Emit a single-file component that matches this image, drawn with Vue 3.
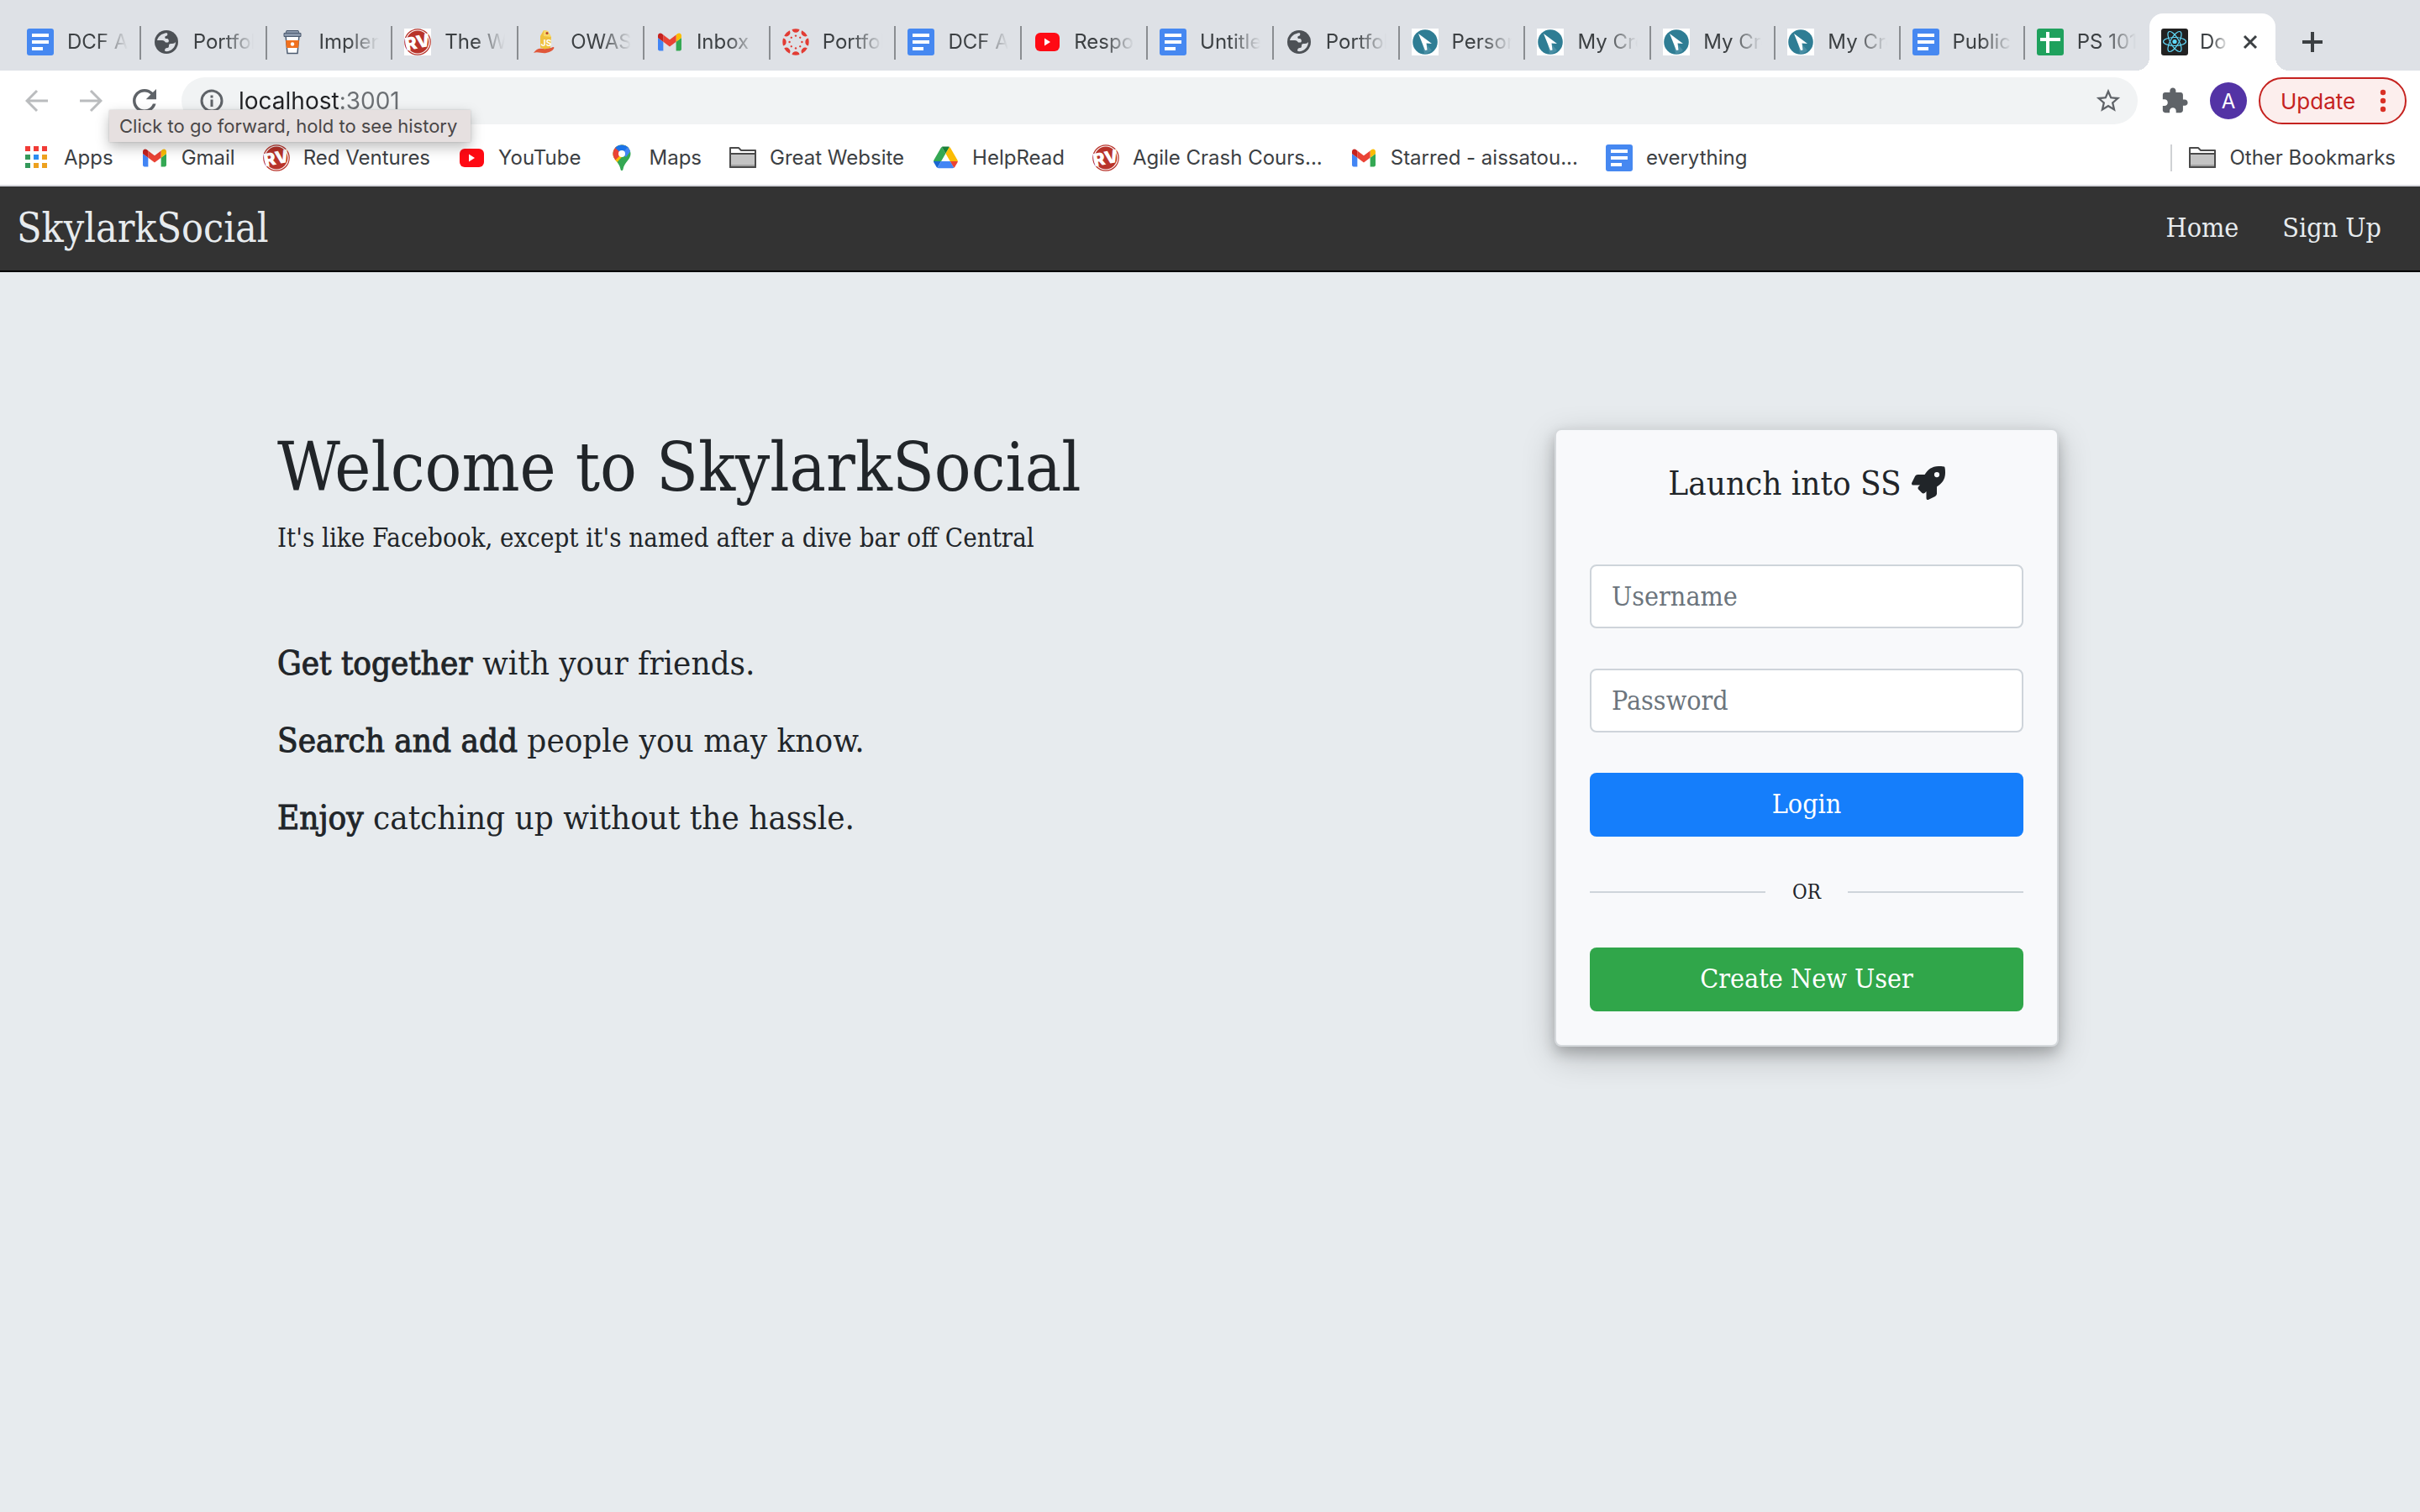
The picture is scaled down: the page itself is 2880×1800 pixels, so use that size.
<script setup>
import { ref } from 'vue'

const tabs = [
  { icon: 'docs', title: 'DCF A' },
  { icon: 'globe', title: 'Portfol' },
  { icon: 'coffee', title: 'Implen' },
  { icon: 'rv', title: 'The W', tile: true },
  { icon: 'juice', title: 'OWAS' },
  { icon: 'gmail', title: 'Inbox' },
  { icon: 'canvas', title: 'Portfol' },
  { icon: 'docs', title: 'DCF A' },
  { icon: 'youtube', title: 'Respo' },
  { icon: 'docs', title: 'Untitle' },
  { icon: 'globe', title: 'Portfol' },
  { icon: 'pointer', title: 'Person', tile: true },
  { icon: 'pointer', title: 'My Cre', tile: true },
  { icon: 'pointer', title: 'My Cre', tile: true },
  { icon: 'pointer', title: 'My Cre', tile: true },
  { icon: 'docs', title: 'Public' },
  { icon: 'sheets', title: 'PS 101' },
  { icon: 'react', title: 'Do', active: true },
]

const bookmarks = [
  { icon: 'apps', title: 'Apps' },
  { icon: 'gmail', title: 'Gmail' },
  { icon: 'rv', title: 'Red Ventures' },
  { icon: 'youtube', title: 'YouTube' },
  { icon: 'maps', title: 'Maps' },
  { icon: 'folder', title: 'Great Website' },
  { icon: 'drive', title: 'HelpRead' },
  { icon: 'rv', title: 'Agile Crash Cours...' },
  { icon: 'gmail', title: 'Starred - aissatou...' },
  { icon: 'docs', title: 'everything' },
]

const petals = [...Array(8)].map((_, i) => i * 45)
const orbits = [0, 60, 120]

const features = [
  { lead: 'Get together', rest: 'with your friends.' },
  { lead: 'Search and add', rest: 'people you may know.' },
  { lead: 'Enjoy', rest: 'catching up without the hassle.' },
]

const address = ref('localhost:3001')
const username = ref('')
const password = ref('')
</script>

<template>
  <div class="window">
    <svg class="sprite" aria-hidden="true">
      <symbol id="docs" viewBox="0 0 32 32">
        <rect width="32" height="32" rx="3" fill="#4688f1" />
        <path d="M6 6h20v4H6zM6 14h20v4H6zM6 22h13v4H6z" fill="#fff" />
      </symbol>
      <symbol id="sheets" viewBox="0 0 32 32">
        <rect width="32" height="32" rx="3" fill="#1fa15d" />
        <path d="M11 4h4v7h13v4H15v14h-4V15H4v-4h7z" fill="#fff" />
      </symbol>
      <symbol id="globe" viewBox="0 0 32 32">
        <circle cx="16" cy="16" r="14" fill="#4d5156" />
        <g transform="translate(2 2)" fill="#dee1e6">
          <path d="M11 4C7 5 4 8 3 12h6c2 0 3 1 4 2.500h3c1.500-1 1-4-1-4.500h-2c-1-1-1-2 0-3 2 0 3-2 2-3.500-1-.5-3 0-4 .5z" />
          <path d="M25 14c0 6-5 11-11 11.200l-2-.7c0-2 1-3.500 3-3.500s2-2 2-3c0-2 2-2 4-2s3-1 4-2z" />
        </g>
      </symbol>
      <symbol id="coffee" viewBox="0 0 32 32">
        <path d="M8 8h16l-2 21.500H10z" fill="#fff" stroke="#4c5b70" stroke-width="1.500" />
        <path d="M8 14h16l-1 9H9z" fill="#f0701d" />
        <circle cx="16" cy="18.500" r="2.200" fill="#fff" />
        <path d="M9 2.500h14l1 3H8z" fill="#8a97aa" stroke="#4c5b70" />
        <path d="M6 5.500h20v4H6z" fill="#8a97aa" stroke="#4c5b70" />
      </symbol>
      <symbol id="rv" viewBox="0 0 32 32">
        <circle cx="16" cy="16" r="15.200" fill="#fff" stroke="#b8332a" stroke-width="1.200" />
        <circle cx="16" cy="16" r="13.400" fill="#b8332a" />
        <text x="16" y="23.500" text-anchor="middle" font-family="Inter, sans-serif" font-size="21" font-weight="900" fill="#fff" transform="rotate(-12 16 16)">RV</text>
      </symbol>
      <symbol id="juice" viewBox="0 0 32 32">
        <path d="M4 29c3-5 7-6 11-5l10-1c3-2 4-1 3 1-2 3-5 4-9 5-5 1-10-2-15 0z" fill="#e0573a" />
        <path d="M12 9l4-7 5 1 4 7-1 13-7 1.500-5-2z" fill="#f0c13d" />
        <path d="M16 2l5 1 4 7-9-1z" fill="#f8d968" />
        <circle cx="20" cy="5.500" r="1.500" fill="#b5402f" />
        <text x="19" y="21" text-anchor="middle" font-family="Inter, sans-serif" font-size="10" font-weight="700" fill="#fff">JS</text>
      </symbol>
      <symbol id="gmail" viewBox="0 0 32 32">
        <g transform="translate(2 5.500) scale(.318) translate(-52 -42)">
          <path fill="#4285f4" d="M58 108h14V74L52 59v43c0 3.320 2.690 6 6 6" />
          <path fill="#34a853" d="M120 108h14c3.320 0 6-2.690 6-6V59l-20 15" />
          <path fill="#fbbc04" d="M120 48v26l20-15v-8c0-7.420-8.470-11.650-14.400-7.200" />
          <path fill="#ea4335" d="M72 74V48l24 18 24-18v26L96 92" />
          <path fill="#c5221f" d="M52 51v8l20 15V48l-5.600-4.200c-5.940-4.450-14.400-.22-14.400 7.200" />
        </g>
      </symbol>
      <symbol id="canvas" viewBox="0 0 32 32">
        <g v-for="a in petals" :key="a" :transform="`rotate(${a} 16 16)`" fill="#e23c34">
          <path d="M11.500 1a16 16 0 0 1 9 0 4.600 4.600 0 0 1-9 0z" />
          <circle cx="16" cy="8.600" r="1.200" />
        </g>
      </symbol>
      <symbol id="youtube" viewBox="0 0 32 32">
        <rect x="2" y="5" width="29" height="22" rx="6" fill="#ff0a14" />
        <path d="M13 11.500l7 4.500-7 4.500z" fill="#fff" />
      </symbol>
      <symbol id="pointer" viewBox="0 0 32 32">
        <circle cx="16" cy="16" r="14.800" fill="#2f7d94" />
        <path d="M12 12l12 14a14 14 0 0 1-9 4z" fill="#4a8fa5" />
        <path d="M8 6l16 12-6.500-.5 1 8-2.500.5z" fill="#fff" />
      </symbol>
      <symbol id="react" viewBox="0 0 32 32">
        <rect width="32" height="32" rx="3" fill="#222" />
        <circle cx="16" cy="15.500" r="2.600" fill="#61dafb" />
        <ellipse v-for="a in orbits" :key="a" cx="16" cy="15.500" rx="13.500" ry="5" fill="none" stroke="#61dafb" stroke-width="1.200" :transform="`rotate(${a} 16 15.500)`" />
      </symbol>
      <symbol id="apps" viewBox="0 0 32 32">
        <path d="M2 2h6v6H2zM12 2h6v6h-6zM22 2h6v6h-6z" fill="#f13b36" />
        <path d="M2 12h6v6H2zM2 22h6v6H2z" fill="#34995a" />
        <path d="M12 12h6v6h-6z" fill="#2d8cf0" />
        <path d="M22 12h6v6h-6zM12 22h6v6h-6zM22 22h6v6h-6z" fill="#eda11f" />
      </symbol>
      <symbol id="maps" viewBox="0 0 32 32">
        <clipPath id="pin"><path d="M16 .5c6 0 10.500 4.700 10.500 10.500C26.500 18 19 21 17.500 29.500c-.3 2-2.700 2-3 0C13 21 5.500 18 5.500 11 5.500 5.200 10 .5 16 .5z" /></clipPath>
        <g clip-path="url(#pin)">
          <rect width="32" height="32" fill="#34a853" />
          <path d="M26 4L4 28V12L18 -2z" fill="#fbbc04" />
          <path d="M16 11L8 19l-6-2V2h8z" fill="#ea4335" />
          <path d="M8 4l8 7 10-8L16 -3z" fill="#1a73e8" />
          <path d="M16 11l8-9 4 4-7 9z" fill="#4285f4" />
        </g>
        <circle cx="16" cy="11" r="4" fill="#fff" />
      </symbol>
      <symbol id="folder" viewBox="0 0 32 32">
        <path d="M1 27V4h10l3 3h17v20z" fill="#fff" stroke="#4a4a4a" stroke-width="2" stroke-linejoin="round" />
        <path d="M1 11h30v16H1z" fill="#c4c4c4" stroke="#4a4a4a" stroke-width="2" stroke-linejoin="round" />
        <path d="M2 24h28v2H2z" fill="#a2a2a2" />
      </symbol>
      <symbol id="drive" viewBox="0 0 32 32">
        <g transform="translate(2 2.500) scale(.33)">
          <path fill="#1967d2" d="m6.600 66.850 3.850 6.650c.8 1.400 1.950 2.500 3.300 3.300l13.750-23.800h-27.500c0 1.550.4 3.100 1.200 4.500z" />
          <path fill="#34a853" d="m43.650 25-13.750-23.800c-1.350.8-2.500 1.900-3.300 3.300l-25.400 44a9.060 9.060 0 0 0 -1.200 4.500h27.500z" />
          <path fill="#ea4335" d="m73.550 76.800c1.350-.8 2.500-1.900 3.300-3.300l1.600-2.750 7.650-13.250c.8-1.400 1.200-2.950 1.200-4.500h-27.500l5.850 11.500z" />
          <path fill="#188038" d="m43.650 25 13.750-23.800c-1.350-.8-2.900-1.200-4.500-1.200h-18.500c-1.600 0-3.150.45-4.500 1.200z" />
          <path fill="#4285f4" d="m59.800 53h-32.300l-13.750 23.800c1.350.8 2.900 1.200 4.500 1.200h50.800c1.600 0 3.150-.45 4.500-1.200z" />
          <path fill="#fbbc04" d="m73.400 26.500-12.700-22c-.8-1.400-1.950-2.500-3.300-3.300l-13.750 23.800 16.150 28h27.450c0-1.550-.4-3.100-1.200-4.500z" />
        </g>
      </symbol>
    </svg>

    <header class="chrome">
      <div class="tabstrip">
        <div v-for="(tab, i) in tabs" :key="i" class="tab" :class="{ active: tab.active }">
          <svg class="icon" :class="{ tile: tab.tile }"><use :href="'#' + tab.icon" /></svg>
          <span class="tab-title">{{ tab.title }}</span>
          <button v-if="tab.active" class="plain close" aria-label="Close tab">
            <svg viewBox="0 0 18 18"><path d="M2 2l14 14M16 2L2 16" stroke="#3c4043" stroke-width="3" /></svg>
          </button>
        </div>
        <button class="plain new-tab" aria-label="New tab">
          <svg viewBox="0 0 24 24"><path d="M12 0v24M0 12h24" stroke="#3c4043" stroke-width="4" /></svg>
        </button>
      </div>

      <div class="toolbar">
        <button class="plain nav-button" aria-label="Back">
          <svg viewBox="0 0 28 28"><path d="M27 14H3M14 2L2 14l12 12" fill="none" stroke="#babcbe" stroke-width="3" /></svg>
        </button>
        <div class="forward">
          <button class="plain nav-button" aria-label="Forward" aria-describedby="forward-tip">
            <svg viewBox="0 0 28 28"><path d="M1 14h24M14 2l12 12-12 12" fill="none" stroke="#babcbe" stroke-width="3" /></svg>
          </button>
          <span id="forward-tip" class="tooltip" role="tooltip">Click to go forward, hold to see history</span>
        </div>
        <button class="plain nav-button" aria-label="Reload">
          <svg viewBox="4 4 16 16"><path fill="#5f6368" d="M17.650 6.350C16.200 4.900 14.210 4 12 4c-4.420 0-7.990 3.580-7.990 8s3.570 8 7.990 8c3.730 0 6.840-2.550 7.730-6h-2.080c-.82 2.330-3.040 4-5.650 4-3.310 0-6-2.690-6-6s2.690-6 6-6c1.660 0 3.140.69 4.220 1.780L13 11h7V4l-2.350 2.350z" /></svg>
        </button>
        <div class="omnibox">
          <svg class="info" viewBox="0 0 28 28"><circle cx="14" cy="14" r="12" fill="none" stroke="#5f6368" stroke-width="3" /><path d="M12.500 12.500h3V21h-3zM12.500 7.500h3v3h-3z" fill="#5f6368" /></svg>
          <input v-model="address" class="address" type="text" aria-label="Address" />
          <button class="plain star" aria-label="Bookmark this page">
            <svg viewBox="0 0 24 24"><path fill="#5f6368" d="M22 9.240l-7.190-.62L12 2 9.190 8.630 2 9.240l5.460 4.730L5.820 21 12 17.270 18.180 21l-1.630-7.030L22 9.240zM12 15.400l-3.760 2.270 1-4.280-3.320-2.880 4.380-.38L12 6.100l1.710 4.040 4.380.38-3.320 2.880 1 4.280L12 15.400z" /></svg>
          </button>
        </div>
        <button class="plain extensions" aria-label="Extensions">
          <svg viewBox="0 0 24 24"><path fill="#5f6368" d="M20.500 11H19V7c0-1.100-.9-2-2-2h-4V3.500C13 2.120 11.880 1 10.500 1S8 2.120 8 3.500V5H4c-1.100 0-1.990.9-1.990 2v3.800H3.500c1.490 0 2.700 1.210 2.700 2.700s-1.210 2.700-2.700 2.700H2V20c0 1.100.9 2 2 2h3.800v-1.500c0-1.490 1.210-2.700 2.700-2.700 1.490 0 2.700 1.210 2.700 2.700V22H17c1.100 0 2-.9 2-2v-4h1.500c1.380 0 2.500-1.120 2.500-2.500S21.880 11 20.500 11z" /></svg>
        </button>
        <button class="plain avatar">A</button>
        <button class="plain update">
          Update
          <svg viewBox="0 0 8 28"><circle cx="4" cy="4" r="3.200" /><circle cx="4" cy="14" r="3.200" /><circle cx="4" cy="24" r="3.200" /></svg>
        </button>
      </div>

      <nav class="bookmarks" aria-label="Bookmarks">
        <a v-for="mark in bookmarks" :key="mark.title" class="bookmark" href="#">
          <svg class="icon"><use :href="'#' + mark.icon" /></svg>{{ mark.title }}
        </a>
        <a class="bookmark other" href="#">
          <svg class="icon"><use href="#folder" /></svg>Other Bookmarks
        </a>
      </nav>
    </header>

    <nav class="site-nav" aria-label="Main">
      <a class="brand" href="#">SkylarkSocial</a>
      <a href="#">Home</a>
      <a href="#">Sign Up</a>
    </nav>

    <main class="page">
      <section class="intro">
        <h1>Welcome to SkylarkSocial</h1>
        <p class="tagline">It's like Facebook, except it's named after a dive bar off Central</p>
        <p v-for="f in features" :key="f.lead" class="feature"><strong>{{ f.lead }}</strong> {{ f.rest }}</p>
      </section>

      <form class="card" @submit.prevent>
        <h2>
          Launch into SS
          <svg viewBox="0 0 512 512" aria-hidden="true"><path fill="currentColor" d="M505 19c-1-5.500-6.600-11-12-12C460.700 0 435.500 0 410.400 0 307.200 0 245.300 55.200 199 128H94.800c-16.300 0-35.500 11.900-42.900 26.500L2.500 253.300A28.400 28.400 0 0 0 0 264a24 24 0 0 0 24 24h103.800l-22.500 22.500c-11.300 11.300-13 32.200 0 45.200l51 51c11 11.100 32 13.100 45.200 0L224 384.200V488a24 24 0 0 0 24 24 28.600 28.600 0 0 0 10.700-2.500l98.700-49.400c14.700-7.300 26.600-26.500 26.600-42.900V312.800c72.600-46.300 128-108.400 128-211.100 0-25.200 0-50.400-7-82.700zM384 168a40 40 0 1 1 40-40 40 40 0 0 1-40 40z" /></svg>
        </h2>
        <input v-model="username" type="text" placeholder="Username" aria-label="Username" />
        <input v-model="password" type="password" placeholder="Password" aria-label="Password" />
        <button class="plain login" type="submit">Login</button>
        <div class="divider">OR</div>
        <button class="plain create" type="button">Create New User</button>
      </form>
    </main>
  </div>
</template>

<style>
body {
  margin: 0;
  background: #e7ebee;
}
</style>

<style scoped>
* {
  box-sizing: border-box;
}

.window {
  min-height: 100vh;
  background: #e7ebee;
  color: #212529;
  font-family: "DejaVu Serif Condensed", "DejaVu Serif", serif;
}

.sprite {
  position: absolute;
  width: 0;
  height: 0;
}

.plain {
  display: flex;
  align-items: center;
  justify-content: center;
  flex: none;
  padding: 0;
  border: 0;
  background: none;
  font: inherit;
}

.icon {
  flex: none;
  width: 32px;
  height: 32px;
}

a {
  color: inherit;
  text-decoration: none;
}

/* Browser chrome */
.chrome {
  border-bottom: 2px solid #d8d9de;
  background: #fff;
  color: #3c4043;
  font-family: Inter, "Liberation Sans", sans-serif;
  font-size: 24px;
}

.tabstrip {
  display: flex;
  height: 84px;
  padding: 16px 84px 0 18px;
  background: #dee1e6;
}

.tab {
  display: flex;
  flex: 150 1 0;
  align-items: center;
  gap: 16px;
  min-width: 0;
  padding: 0 16px 0 14px;
  position: relative;
}

.tab:nth-child(n + 14) {
  flex-grow: 148;
}

.tab:not(.active)::after {
  content: "";
  position: absolute;
  top: 15px;
  right: 0;
  width: 2px;
  height: 40px;
  background: #8a8d91;
}

.tab:nth-last-child(3)::after {
  display: none;
}

.tile {
  background: #fff;
}

.tab-title {
  flex: 1;
  min-width: 0;
  overflow: hidden;
  line-height: 32px;
  white-space: nowrap;
  mask-image: linear-gradient(to left, transparent, #000 36px);
}

.tab.active {
  gap: 14px;
  padding-right: 18px;
  border-radius: 16px 16px 0 0;
  background: #fff;
}

.active .tab-title {
  mask-image: linear-gradient(to left, transparent, #000 20px);
}

.active::before,
.active::after {
  content: "";
  position: absolute;
  bottom: 0;
  width: 16px;
  height: 16px;
}

.active::before {
  right: 100%;
  background: radial-gradient(circle at 0 0, #dee1e6 16px, #fff 16px);
}

.active::after {
  left: 100%;
  background: radial-gradient(circle at 100% 0, #dee1e6 16px, #fff 16px);
}

.close {
  width: 24px;
}

.close svg {
  width: 18px;
}

.new-tab {
  width: 88px;
}

.new-tab svg {
  width: 24px;
}

.toolbar {
  display: flex;
  align-items: center;
  height: 72px;
  padding: 0 16px 0 12px;
}

.nav-button {
  width: 64px;
  height: 56px;
}

.nav-button svg {
  width: 28px;
  height: 28px;
}

.forward {
  position: relative;
}

.tooltip {
  position: absolute;
  z-index: 1;
  top: 39px;
  left: 54px;
  padding: 0 16px 0 12px;
  background: #e6e0e0;
  box-shadow: 0 0 2px #8886, 0 6px 16px #0004;
  color: #4a4748;
  font-size: 22px;
  line-height: 38px;
  white-space: nowrap;
}

.omnibox {
  display: flex;
  flex: 1;
  align-items: center;
  gap: 18px;
  height: 56px;
  margin: 0 27px 0 12px;
  padding: 0 18px 0 22px;
  border-radius: 28px;
  background: #f1f3f4;
}

.info {
  width: 28px;
}

.address {
  flex: 1;
  min-width: 0;
  padding: 0;
  border: 0;
  outline: 0;
  background: linear-gradient(to right, #202124 120px, #6b6f73 120px) text;
  color: #202124;
  -webkit-text-fill-color: transparent;
  font: 28px/40px Inter, "Liberation Sans", sans-serif;
}

.star svg {
  width: 34px;
}

.extensions svg {
  width: 34px;
}

.avatar {
  width: 44px;
  height: 44px;
  margin: 0 14px 0 25px;
  border-radius: 50%;
  background: #5333a5;
  color: #fff;
  font-size: 24px;
}

.update {
  justify-content: space-between;
  width: 176px;
  height: 56px;
  padding: 0 22px 0 24px;
  border: 2px solid #c5221f;
  border-radius: 28px;
  background: #fceeed;
  color: #c5221f;
  font-size: 26px;
}

.update svg {
  width: 8px;
  fill: #d93025;
}

.bookmarks {
  display: flex;
  align-items: center;
  gap: 33px;
  height: 64px;
  padding: 0 29px 0 28px;
}

.bookmark {
  display: flex;
  align-items: center;
  gap: 16px;
  line-height: 32px;
  white-space: nowrap;
}

.other {
  margin-left: auto;
  padding-left: 20px;
  border-left: 2px solid #cfd1d4;
}

/* Site */
.site-nav {
  display: flex;
  align-items: center;
  gap: 52px;
  height: 102px;
  padding: 0 46px 2px 20px;
  border-bottom: 2px solid #000;
  background: #333;
  color: #e7ebee;
  font-size: 32px;
}

.brand {
  margin-right: auto;
  font-size: 48px;
}

.page {
  display: flex;
  align-items: flex-start;
  justify-content: space-between;
  max-width: 2220px;
  margin: 0 auto;
  padding: 186px 100px 100px 0;
}

h1,
h2,
p {
  margin: 0;
  font-weight: 400;
}

h1 {
  font-size: 81px;
  line-height: 92px;
}

.tagline {
  margin: 14px 0 95px;
  font-size: 31px;
  line-height: 48px;
}

.feature {
  margin-bottom: 32px;
  font-size: 40px;
  line-height: 60px;
}

.feature strong {
  font-weight: 400;
  -webkit-text-stroke: 1px currentColor;
}

.card {
  display: flex;
  flex-direction: column;
  width: 600px;
  padding: 40px;
  border: 2px solid #d5d9dc;
  border-radius: 8px;
  background: #f8f9fb;
  box-shadow: 0 8px 16px #0003, 0 12px 40px #0003;
  font-size: 32px;
}

h2 {
  display: flex;
  align-items: center;
  justify-content: center;
  gap: 12px;
  margin-bottom: 74px;
  font-size: 40px;
  line-height: 46px;
}

h2 svg {
  width: 40px;
  height: 40px;
}

.card input {
  height: 76px;
  margin-bottom: 48px;
  padding: 0 24px;
  border: 2px solid #ced4da;
  border-radius: 8px;
  background: #fff;
  color: #495057;
  font: inherit;
}

.card input::placeholder {
  color: #6c757d;
  opacity: 1;
}

.login,
.create {
  height: 76px;
  padding-bottom: 2px;
  border-radius: 8px;
  background: #157efb;
  color: #fff;
}

.create {
  background: #30a64a;
}

.divider {
  display: flex;
  align-items: center;
  gap: 32px;
  margin: 48px 0;
  font-size: 24px;
  line-height: 36px;
}

.divider::before,
.divider::after {
  content: "";
  flex: 1;
  height: 2px;
  background: #ced4da;
}
</style>
